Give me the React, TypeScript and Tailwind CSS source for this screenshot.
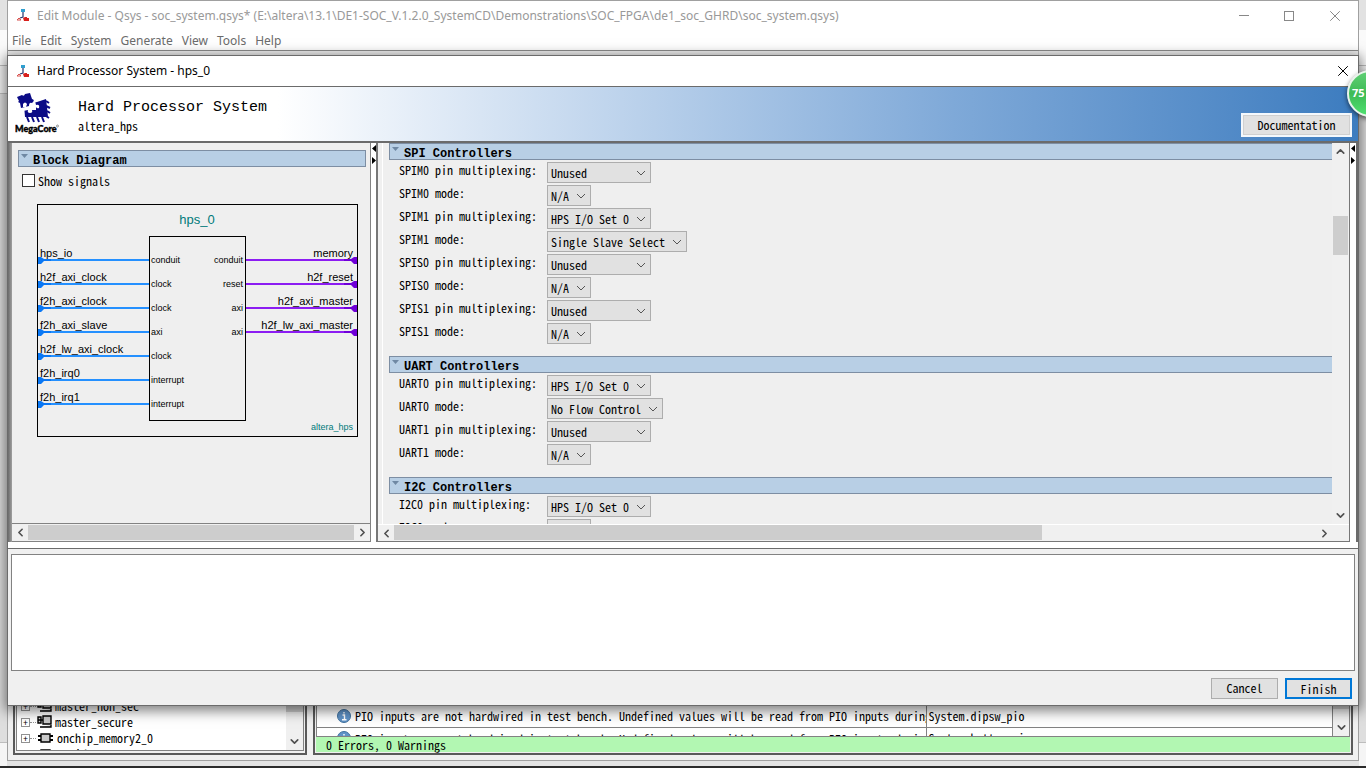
import type { ReactNode } from "react";
import { ChevronDown, ChevronLeft, ChevronRight, ChevronUp, X } from "lucide-react";

interface Field {
	label: string;
	value: string;
	width: string;
}

interface Section {
	title: string;
	fields: Field[];
}

const MENUS = ["File", "Edit", "System", "Generate", "View", "Tools", "Help"];

const W_NA = "w-[44px]";
const W_SET = "w-[104px]";

const SECTIONS: Section[] = [
	{
		title: "SPI Controllers",
		fields: [
			{ label: "SPIM0 pin multiplexing:", value: "Unused", width: W_SET },
			{ label: "SPIM0 mode:", value: "N/A", width: W_NA },
			{ label: "SPIM1 pin multiplexing:", value: "HPS I/O Set 0", width: W_SET },
			{ label: "SPIM1 mode:", value: "Single Slave Select", width: "w-[140px]" },
			{ label: "SPIS0 pin multiplexing:", value: "Unused", width: W_SET },
			{ label: "SPIS0 mode:", value: "N/A", width: W_NA },
			{ label: "SPIS1 pin multiplexing:", value: "Unused", width: W_SET },
			{ label: "SPIS1 mode:", value: "N/A", width: W_NA },
		],
	},
	{
		title: "UART Controllers",
		fields: [
			{ label: "UART0 pin multiplexing:", value: "HPS I/O Set 0", width: W_SET },
			{ label: "UART0 mode:", value: "No Flow Control", width: "w-[116px]" },
			{ label: "UART1 pin multiplexing:", value: "Unused", width: W_SET },
			{ label: "UART1 mode:", value: "N/A", width: W_NA },
		],
	},
	{
		title: "I2C Controllers",
		fields: [
			{ label: "I2C0 pin multiplexing:", value: "HPS I/O Set 0", width: W_SET },
			{ label: "I2C0 mode:", value: "N/A", width: W_NA },
		],
	},
];

const INPUTS = [
	["hps_io", "conduit"],
	["h2f_axi_clock", "clock"],
	["f2h_axi_clock", "clock"],
	["f2h_axi_slave", "axi"],
	["h2f_lw_axi_clock", "clock"],
	["f2h_irq0", "interrupt"],
	["f2h_irq1", "interrupt"],
];

const OUTPUTS = [
	["memory", "conduit"],
	["h2f_reset", "reset"],
	["h2f_axi_master", "axi"],
	["h2f_lw_axi_master", "axi"],
];

const TREE = [
	{ name: "master_non_sec", kind: "master" },
	{ name: "master_secure", kind: "master" },
	{ name: "onchip_memory2_0", kind: "chip" },
	{ name: "sysid_qsys", kind: "chip" },
];

const MESSAGES = ["System.dipsw_pio", "System.button_pio"];

export default function App() {
	return (
		<main className="relative grid h-screen grid-cols-[7px_1fr_7px] grid-rows-[1fr_2px] overflow-hidden bg-[#e3e3e3] font-['Noto_Sans_Mono_CJK_SC','Liberation_Mono',monospace] text-[12px] text-black">
			<DesktopEdge />
			<div className="flex min-h-0 min-w-0 flex-col pb-[5px]">
				<MainWindow />
			</div>
			<DesktopEdge />
			<div className="col-span-3 bg-[#2b2b2b]" />
			<ModuleDialog />
			<div className="absolute top-[70px] -right-[28px] flex size-[47px] items-center rounded-full border-2 border-[#e8f3ea] bg-linear-to-b from-[#5fcf74] via-[#3dbb55] to-[#4fe070] pl-[3px] font-['Open_Sans',sans-serif] text-[11px] font-bold text-white shadow-[0_2px_5px_rgba(0,0,0,0.6)]">
				75
			</div>
		</main>
	);
}

function DesktopEdge() {
	return (
		<div className="flex min-h-0 flex-col">
			<div className="h-[30px] bg-[#e2e2e2]" />
			<div className="h-[36px] border-b border-[#bdbdbd] bg-[#fafafa]" />
			<div className="h-[28px] border-b border-[#bdbdbd] bg-[#f3f3f3]" />
			<div className="flex-1 bg-[#dedede]" />
			<div className="h-[24px] border-t border-[#bdbdbd] bg-[#f5f5f5]" />
		</div>
	);
}

function MainWindow() {
	return (
		<div className="flex min-h-0 flex-1 flex-col border border-[#a0a0a0] bg-[#f0f0f0]">
			<div className="flex h-[29px] items-center bg-white pl-[9px] font-['Noto_Sans',sans-serif] text-[#999999]">
				<QsysIcon />
				<span className="ml-2 flex-1 truncate">
					Edit Module - Qsys - soc_system.qsys* (E:\altera\13.1\DE1-SOC_V.1.2.0_SystemCD\Demonstrations\SOC_FPGA\de1_soc_GHRD\soc_system.qsys)
				</span>
				<button type="button" aria-label="Minimize" className="flex w-[45px] justify-center">
					<span className="h-px w-[10px] bg-[#888]" />
				</button>
				<button type="button" aria-label="Maximize" className="flex w-[46px] justify-center">
					<span className="size-[10px] border border-[#888]" />
				</button>
				<button type="button" aria-label="Close" className="flex w-[46px] justify-center">
					<CloseGlyph color="#888" />
				</button>
			</div>
			<nav className="flex h-[21px] items-center gap-[9px] border-b border-[#8c8c8c] bg-white pt-[2px] pl-1 font-['Noto_Sans',sans-serif] text-[#6b6b6b]">
				{MENUS.map((menu) => (
					<button key={menu} type="button">{menu}</button>
				))}
			</nav>
			<div className="flex-1" />
			<div className="flex h-[62px] gap-[6px] px-[5px] pb-[5px]">
				<SystemTree />
				<MessagesPane />
			</div>
		</div>
	);
}

function SystemTree() {
	return (
		<div className="w-[294px] border-2 border-t-0 border-[#5a5a5a] bg-[#f0f0f0] p-px pt-0">
			<div className="flex h-[53px] border border-t-0 border-[#828282] bg-white">
				<ul className="flex-1 overflow-hidden pl-1">
					{TREE.map((node) => (
						<li key={node.name} className="flex h-4 items-center leading-4">
							<span className="flex size-[9px] items-center justify-center border border-[#919191] text-[9px] leading-none">+</span>
							<span className="w-[6px] border-t border-dotted border-[#919191]" />
							{node.kind === "master" ? <MasterIcon /> : <ChipIcon />}
							<span className="ml-[2px]">{node.name}</span>
						</li>
					))}
				</ul>
				<div className="flex w-[17px] flex-col bg-[#f0f0f0]">
					<div className="h-[14px] bg-[#cdcdcd]" />
					<div className="flex-1" />
					<Arrow><ChevronDown size={13} strokeWidth={3} /></Arrow>
				</div>
			</div>
		</div>
	);
}

function MessagesPane() {
	return (
		<div className="flex min-w-0 flex-1 flex-col border-2 border-t-0 border-[#5a5a5a] bg-[#f0f0f0] px-px pb-px">
			<div className="flex min-h-0 flex-1 overflow-hidden border-b border-l border-[#828282] bg-white pt-[7px]">
				<div className="min-w-0 flex-1">
					<table className="w-full table-fixed border-collapse">
						<tbody>
							{MESSAGES.map((source) => (
								<tr key={source} className="h-[22px] border-b border-[#828282]">
									<td className="w-3/5 border-r border-[#828282] pl-5">
										<div className="flex items-center gap-1 overflow-hidden leading-[21px] whitespace-nowrap">
											<InfoIcon />
											PIO inputs are not hardwired in test bench. Undefined values will be read from PIO inputs during simulation.
										</div>
									</td>
									<td className="pl-[2px] leading-[20px]">{source}</td>
								</tr>
							))}
						</tbody>
					</table>
				</div>
				<div className="flex w-[18px] flex-col border-x border-[#828282] bg-[#f0f0f0]">
					<div className="h-[4px] bg-[#cdcdcd]" />
					<div className="flex-1" />
					<Arrow><ChevronDown size={13} strokeWidth={3} /></Arrow>
				</div>
			</div>
			<div className="h-[15px] bg-[#b2f7b2] pl-[10px] leading-[15px]">0 Errors, 0 Warnings</div>
		</div>
	);
}

function ModuleDialog() {
	return (
		<section
			role="dialog"
			aria-label="Hard Processor System - hps_0"
			className="absolute inset-x-[7px] top-[55px] bottom-[62px] flex flex-col border border-[#6b6b6b] bg-[#f0f0f0] shadow-[0_3px_12px_2px_rgba(0,0,0,0.5)]"
		>
			<div className="flex h-[31px] items-center border-b border-[#6b6b6b] bg-white pl-[9px] font-['Noto_Sans',sans-serif]">
				<QsysIcon />
				<span className="ml-2 flex-1">Hard Processor System - hps_0</span>
				<button type="button" aria-label="Close dialog" className="flex w-[30px] justify-center">
					<CloseGlyph color="#000" />
				</button>
			</div>
			<header className="flex h-[56px] items-center border-b-2 border-[#6b6b6b] bg-linear-to-r from-white from-20% via-[#7fa9d8] via-70% to-[#3c7cbf] pr-[6px] pl-[7px]">
				<MegaCoreLogo />
				<div className="ml-[19px] flex-1 pt-[3px]">
					<h1 className="font-['Liberation_Mono',monospace] text-[15px] leading-[20px]">Hard Processor System</h1>
					<p className="leading-[16px]">altera_hps</p>
				</div>
				<button type="button" className="mb-1 h-[24px] w-[111px] self-end border-2 border-[#f4f8fc] bg-[#e1e1e1] outline-1 -outline-offset-3 outline-[#d0d0d0]">
					Documentation
				</button>
			</header>
			<div className="flex min-h-0 flex-1">
				<div className="w-[4px] bg-linear-to-r from-[#6b6b6b] to-[#a0a0a0]" />
				<BlockDiagramPanel />
				<SplitHandle />
				<ParameterPanel />
				<div className="w-[8px] border-r-2 border-[#6b6b6b] bg-white">
					<SplitHandle />
				</div>
			</div>
			<div className="h-[6px] bg-white" />
			<div className="border-t border-[#6b6b6b] px-[3px] pt-[5px]">
				<textarea readOnly aria-label="Messages" className="block h-[117px] w-full resize-none border border-[#828282] bg-white" />
			</div>
			<footer className="flex h-[34px] items-center justify-end gap-[7px] pr-[6px]">
				<button type="button" className="h-[21px] w-[67px] border border-[#adadad] bg-[#e1e1e1]">Cancel</button>
				<button type="button" className="h-[21px] w-[67px] border-2 border-[#0078d7] bg-[#e1e1e1]">Finish</button>
			</footer>
		</section>
	);
}

function BlockDiagramPanel() {
	return (
		<section className="flex w-[359px] flex-col border-r border-b border-[#828282] bg-[#efefef]">
			<div className="min-h-0 flex-1 overflow-hidden pt-[7px] pr-1 pl-[6px]">
				<SectionHeader title="Block Diagram" closed />
				<div className="mt-[7px] ml-1 flex items-center gap-[3px] leading-[13px]">
					<input id="show-signals" type="checkbox" className="size-[13px] appearance-none border border-[#333] bg-white" />
					<label htmlFor="show-signals">Show signals</label>
				</div>
				<BlockDiagram />
			</div>
			<div className="flex h-[18px] border-t border-[#828282] bg-[#f0f0f0]">
				<Arrow><ChevronLeft size={13} strokeWidth={3} /></Arrow>
				<div className="my-px flex-1 bg-[#cdcdcd]" />
				<Arrow><ChevronRight size={13} strokeWidth={3} /></Arrow>
			</div>
		</section>
	);
}

function ParameterPanel() {
	return (
		<section className="flex min-w-0 flex-1 flex-col border-r border-b border-l-2 border-[#777] bg-[#f0f0f0]">
			<div className="flex min-h-0 flex-1">
				<div className="ml-1 flex-1 overflow-hidden border-l border-white bg-[#efefef] pl-[6px]">
					{SECTIONS.map((section) => (
						<div key={section.title} className="mb-[10px]">
							<SectionHeader title={section.title} />
							<div className="flex flex-col gap-[2px] py-[2px] pl-[10px]">
								{section.fields.map((field) => (
									<ParameterRow key={field.label} field={field} />
								))}
							</div>
						</div>
					))}
				</div>
				<div className="flex w-[17px] flex-col bg-[#f0f0f0]">
					<Arrow><ChevronUp size={13} strokeWidth={3} /></Arrow>
					<div className="flex-[56]" />
					<div className="mx-px flex-[39] bg-[#cdcdcd]" />
					<div className="flex-[251]" />
					<Arrow><ChevronDown size={13} strokeWidth={3} /></Arrow>
				</div>
			</div>
			<div className="flex h-[17px] border-t border-white pr-[17px]">
				<Arrow><ChevronLeft size={13} strokeWidth={3} /></Arrow>
				<div className="mb-px flex-[647] bg-[#cdcdcd]" />
				<div className="flex-[274]" />
				<Arrow><ChevronRight size={13} strokeWidth={3} /></Arrow>
			</div>
		</section>
	);
}

function ParameterRow({ field }: { field: Field }) {
	const id = field.label.replace(/[^A-Za-z0-9]+/g, "-").toLowerCase();
	return (
		<div className="flex h-[21px]">
			<label htmlFor={id} className="w-[148px] leading-[15px]">{field.label}</label>
			<div className="relative">
				<select id={id} className={`h-[21px] appearance-none border border-[#adadad] bg-[#e1e1e1] pl-[3px] leading-[19px] ${field.width}`}>
					<option>{field.value}</option>
				</select>
				<svg viewBox="0 0 10 6" className="pointer-events-none absolute top-2 right-[5px] h-[6px] w-[10px]" fill="none" stroke="#555">
					<path d="M1 1 L5 5 L9 1" />
				</svg>
			</div>
		</div>
	);
}

function SectionHeader({ title, closed }: { title: string; closed?: boolean }) {
	return (
		<h2 className={`flex h-[17px] border border-[#7d8ea3] bg-[#b8cfe5] font-['Liberation_Mono',monospace] text-[12px] font-bold ${closed ? "" : "border-r-0"}`}>
			<svg viewBox="0 0 14 15" className="h-[15px] w-[14px] shrink-0">
				<path d="M2 3 H9 L5.5 7 Z" fill="#6f88a3" />
			</svg>
			<span className="pt-[3px] leading-[14px]">{title}</span>
		</h2>
	);
}

function SplitHandle() {
	return (
		<div className="w-[5px] bg-white">
			<svg viewBox="0 0 5 24" className="h-[24px] w-[5px]">
				<path d="M5 2 V9 L1 5.5 Z M1 14 V21 L5 17.5 Z" />
			</svg>
		</div>
	);
}

function Arrow({ children }: { children: ReactNode }) {
	return <span className="flex h-[17px] w-[16px] shrink-0 items-center justify-center text-[#505050]">{children}</span>;
}

function CloseGlyph({ color }: { color: string }) {
	return <X size={18} strokeWidth={1} color={color} absoluteStrokeWidth />;
}

function BlockDiagram() {
	return (
		<svg viewBox="0 0 321 233" className="mt-[17px] ml-[19px] h-[233px] w-[321px] font-['Liberation_Sans',sans-serif]">
			<rect x="0.5" y="0.5" width="320" height="232" fill="none" stroke="#000" />
			<rect x="112.5" y="32.5" width="96" height="184" fill="none" stroke="#000" />
			<text x="160" y="20" textAnchor="middle" fontSize="13" fill="#007a7a">hps_0</text>
			{INPUTS.map(([name, kind], i) => (
				<g key={name} transform={`translate(0 ${56 + i * 24})`}>
					<path d="M1 0 H112" stroke="#2490ff" strokeWidth="2" />
					<path d="M1 -3 H4 L7 -1 L14 -1 V1 L7 1 L4 4 H1 Z" fill="#0a78f5" />
					<text x="3" y="-3" fontSize="11">{name}</text>
					<text x="114" y="3" fontSize="9">{kind}</text>
				</g>
			))}
			{OUTPUTS.map(([name, kind], i) => (
				<g key={name} transform={`translate(0 ${56 + i * 24})`}>
					<path d="M209 0 H320" stroke="#8c1cf2" strokeWidth="2" />
					<path d="M320 -3 H317 L314 -1 L307 -1 V1 L314 1 L317 4 H320 Z" fill="#6f00d8" />
					<text x="316" y="-3" fontSize="11" textAnchor="end">{name}</text>
					<text x="206" y="3" fontSize="9" textAnchor="end">{kind}</text>
				</g>
			))}
			<text x="316" y="226" textAnchor="end" fontSize="9" fill="#007a7a">altera_hps</text>
		</svg>
	);
}

function QsysIcon() {
	return (
		<svg viewBox="0 0 12 13" className="h-[13px] w-[12px] shrink-0">
			<path d="M4 0 H8 V3 H4 Z" fill="#2f9fd0" />
			<path d="M6 3 V8 L3 9" fill="none" stroke="#26366e" strokeWidth="1.2" />
			<path d="M6 9 L8 8 H10 V9 H12 V12 H7 Z" fill="#d8201c" />
			<path d="M0 11 L2 9 L4 11 Z" fill="none" stroke="#d8524e" />
		</svg>
	);
}

function MegaCoreLogo() {
	return (
		<svg viewBox="0 0 44 42" className="h-[42px] w-[44px] shrink-0">
			{/* chip body with its pins */}
			<path d="M9 12 L22 9 L31 6 L32 14 L33 24 L10 24 Z" fill="#0b0b86" />
			<path d="M31 8 L34 10 M31 13 L35 15 M32 18 L35 20 M31 23 L34 25 M12 24 L14 29 M17 24 L19 29 M22 24 L24 29 M27 24 L29 29" fill="none" stroke="#0b0b86" strokeWidth="2" />
			{/* socket left in the body */}
			<path d="M7 13 L20 8 L21 12 Q25 11 24 15 Q22 16 21 14 L21 17 L17 17 Q18 20 15 20 Q12 20 13 17 L8 18 Z" fill="#fff" />
			{/* loose puzzle piece */}
			<path d="M2 4 L7 2 Q9 4 10 1 L15 0 L17 6 Q20 7 18 9 L17 10 Q14 9 14 13 L6 15 L5 10 Q2 9 4 8 Z" fill="#0b0b86" />
			<path d="M8 11 Q10 8 12 11 L11 14 H8 Z" fill="#fff" />
			<text x="0" y="39" fontSize="9" fontWeight="900" fontFamily="Lato, sans-serif" stroke="#000" strokeWidth="0.4">MegaCore</text>
			<circle cx="42.5" cy="33" r="1" fill="none" stroke="#333" strokeWidth="0.5" />
		</svg>
	);
}

function MasterIcon() {
	return (
		<svg viewBox="0 0 16 14" className="ml-px h-[14px] w-[16px] shrink-0" fill="#c9c9c9" stroke="#000" strokeWidth="1.4">
			<path d="M1 2 H4 V8 H1 Z M6 1 H14 V9 H6 Z M3 12 H14 V10 M1 5 H6" />
		</svg>
	);
}

function ChipIcon() {
	return (
		<svg viewBox="0 0 18 10" className="ml-px h-[10px] w-[18px] shrink-0">
			<path d="M1 3 H16 M1 7 H16" stroke="#000" strokeWidth="2" />
			<path d="M4 1 H13 V9 H4 Z" fill="#c9c9c9" stroke="#000" strokeWidth="1.4" />
		</svg>
	);
}

function InfoIcon() {
	return (
		<svg viewBox="0 0 14 14" className="h-[14px] w-[14px] shrink-0">
			<circle cx="7" cy="7" r="6.5" fill="#5f93c8" stroke="#41729f" />
			<path d="M7 3 V4.6 M5.5 6 H7.5 V10.5 M5 10.7 H9.5" fill="none" stroke="#fff" strokeWidth="1.4" />
		</svg>
	);
}
